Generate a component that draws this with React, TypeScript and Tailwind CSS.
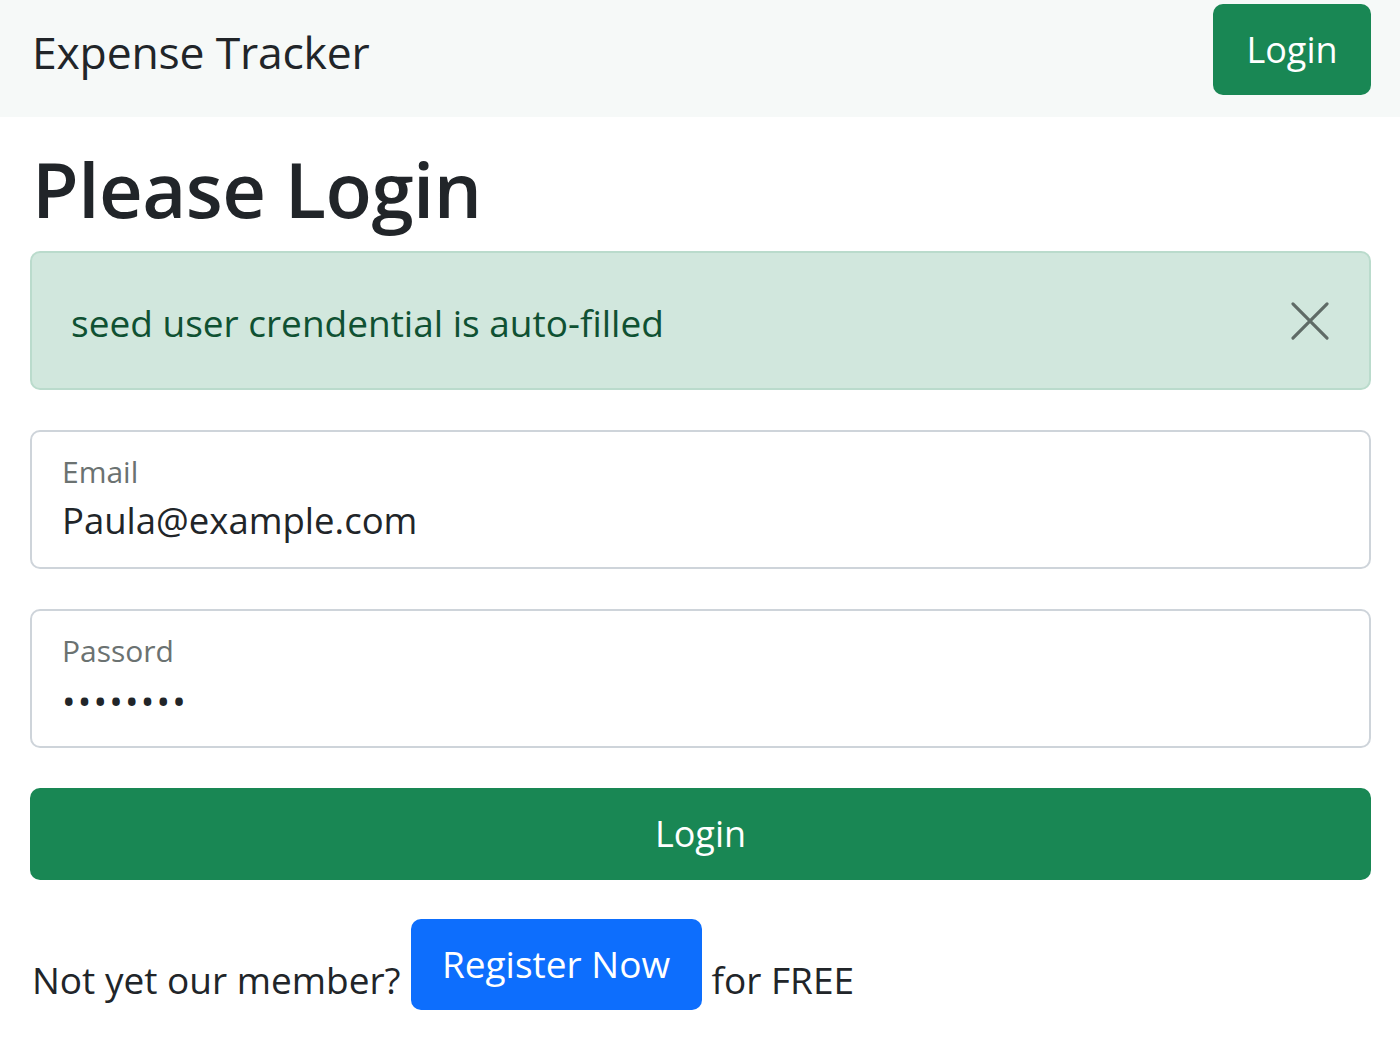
import React, { useState } from 'react';

const App: React.FC = () => {
	const [showAlert, setShowAlert] = useState(true);
	const [email, setEmail] = useState('Paula@example.com');
	const [password, setPassword] = useState('password');

	return (
		<div className="min-h-[1050px] bg-white text-[#212529] font-['Open_Sans',sans-serif]">
			{/* navbar */}
			<nav className="h-[117px] bg-[#f6f9f8] flex items-center justify-between pl-[32px] pr-[29px]">
				<div className="text-[44.5px] leading-none tracking-[-0.2px] -mt-[12px]">Expense Tracker</div>
				<button className="h-[91px] w-[158px] -mt-[18px] rounded-[10px] bg-[#198754] text-white text-[36px]">Login</button>
			</nav>

			<div className="px-[30px] pr-[29px]">
				<h1 className="text-[76px] font-semibold leading-none pl-[2px] pt-[34px] pb-[24px] tracking-[-0.5px]">Please Login</h1>

				{showAlert && (
					<div className="h-[139px] rounded-[10px] border-2 border-[#badbcc] bg-[#d1e7dd] text-[#0f5132] flex items-center justify-between pl-[39px] pr-[38px]">
						<span className="text-[37px] mt-[4px]">seed user crendential is auto-filled</span>
						<button className="w-[42px] h-[42px] text-[#5f6b66]" onClick={() => setShowAlert(false)}>
							<svg viewBox="0 0 16 16" className="w-full h-full" fill="none" stroke="currentColor" strokeWidth="1.2" strokeLinecap="round">
								<path d="M1.5 1.5l13 13M14.5 1.5l-13 13" />
							</svg>
						</button>
					</div>
				)}

				<div className="mt-[40px] h-[139px] rounded-[10px] border-2 border-[#ced4da] pl-[30px] pt-[25px]">
					<div className="text-[30px] text-[#6b7271] leading-none">Email</div>
					<input className="mt-[8px] w-full outline-none text-[36.5px] leading-none bg-transparent" value={email} onChange={(e) => setEmail(e.target.value)} />
				</div>

				<div className="mt-[40px] h-[139px] rounded-[10px] border-2 border-[#ced4da] pl-[30px] pt-[25px]">
					<div className="text-[30px] text-[#6b7271] leading-none">Passord</div>
					<input type="password" className="mt-[11px] w-full outline-none text-[36px] tracking-[2.2px] leading-none bg-transparent" value={password} onChange={(e) => setPassword(e.target.value)} />
				</div>

				<button className="mt-[40px] w-full h-[92px] rounded-[10px] bg-[#198754] text-white text-[36px]">Login</button>

				<div className="mt-[39px] flex items-end pl-[2px] text-[37px]">
					<span className="pb-[3px]">Not yet our member?</span>
					<button className="ml-[10px] h-[91px] w-[291px] rounded-[10px] bg-[#0d6efd] text-white text-[37px] pb-[2px]">Register Now</button>
					<span className="ml-[10px] pb-[3px]">for FREE</span>
				</div>
			</div>
		</div>
	);
};

export default App;
